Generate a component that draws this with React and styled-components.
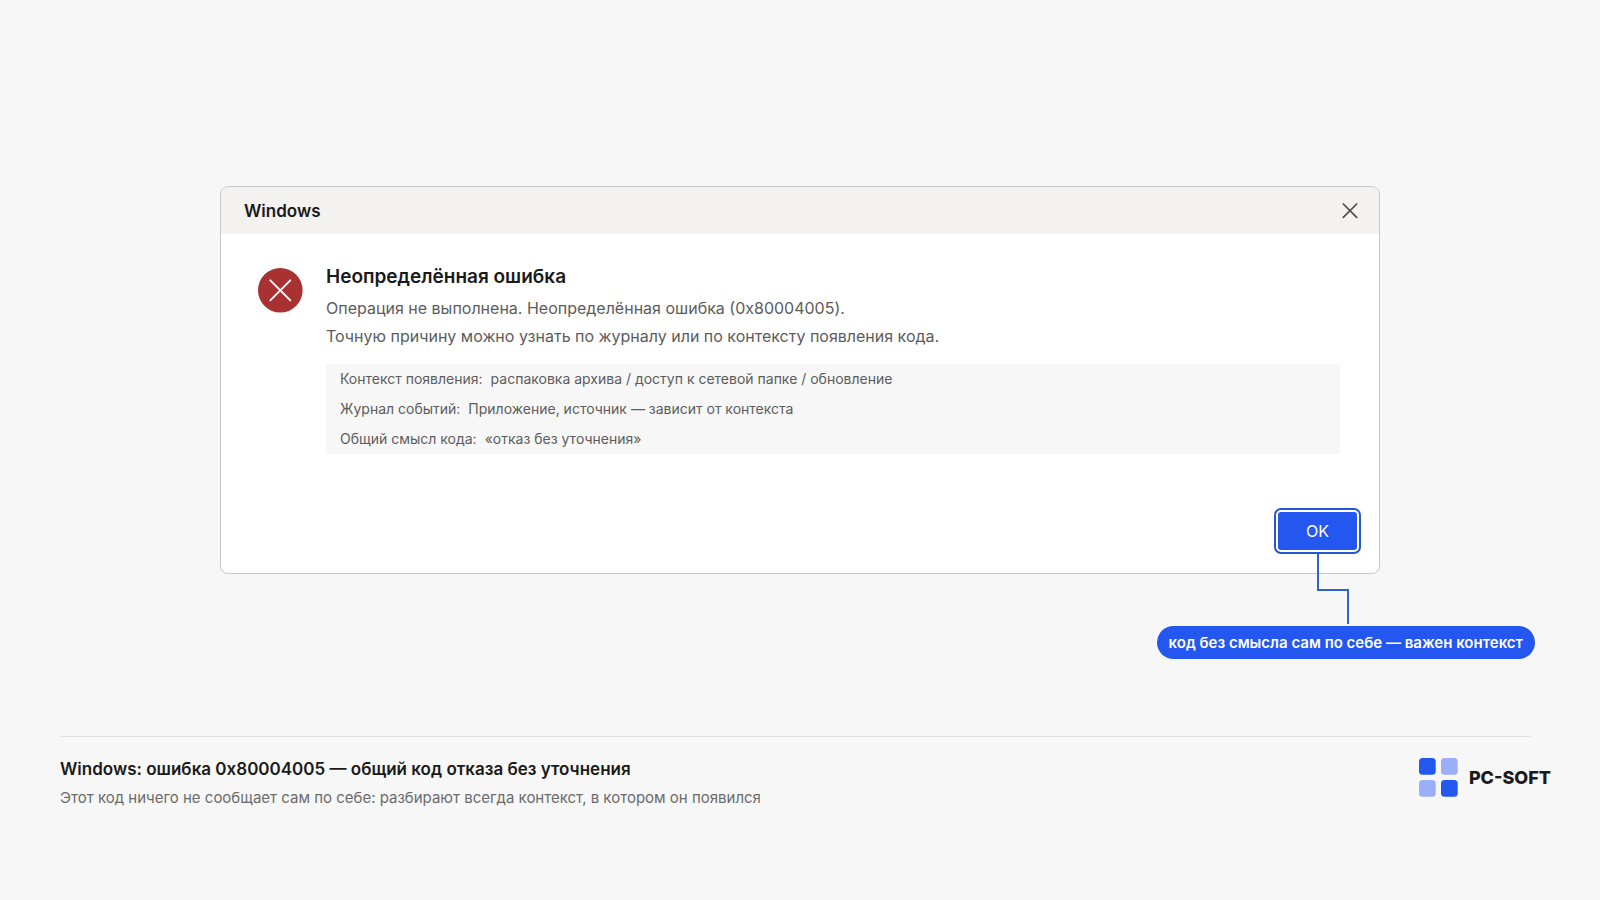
import React from "react";
import styled, { createGlobalStyle } from "styled-components";

const GlobalStyle = createGlobalStyle`
  *, *::before, *::after { box-sizing: border-box; }
  body {
    margin: 0;
    background: #f7f7f7;
    color: #1a1a1a;
    font-family: Inter, "Noto Sans", sans-serif;
  }
  h1, h2, p, dl, dt, dd { margin: 0; }
`;

const Page = styled.div`
  min-height: 100vh;
  padding-top: 186px;
`;

const Stage = styled.main`
  display: flex;
  flex-direction: column;
  padding: 0 220px;
`;

const Dialog = styled.section`
  border: 1px solid #c8c8c8;
  border-radius: 8px;
  background: #ffffff;
  overflow: hidden;
`;

const TitleBar = styled.header`
  display: flex;
  align-items: center;
  justify-content: space-between;
  height: 47px;
  padding: 0 20px 0 23px;
  background: #f3f2f1;
`;

const WindowTitle = styled.h1`
  font-size: 17px;
  line-height: 24px;
  font-weight: 600;
`;

const CloseButton = styled.button`
  display: flex;
  padding: 0;
  border: 0;
  background: none;
  color: #4d4d4d;
`;

const DialogBody = styled.div`
  display: flex;
  align-items: flex-start;
  gap: 23px;
  padding: 29px 39px 0 37px;
`;

const ErrorBadge = styled.svg`
  flex: none;
  margin-top: 5px;
`;

const Message = styled.div`
  flex: 1;
  min-width: 0;
`;

const MessageTitle = styled.h2`
  margin-bottom: 3px;
  font-size: 19px;
  line-height: 28px;
  font-weight: 600;
`;

const MessageLine = styled.p`
  font-size: 16px;
  line-height: 28px;
  color: #5c5c5c;
`;

const Details = styled.dl`
  margin-top: 14px;
  padding: 0 14px;
  border-radius: 2px;
  background: #f7f7f7;
`;

const Detail = styled.div`
  display: flex;
  gap: 8px;
  font-size: 14px;
  line-height: 30px;
  color: #5c5c5c;
`;

const Actions = styled.div`
  display: flex;
  justify-content: flex-end;
  padding: 58px 22px 23px;
`;

const PrimaryButton = styled.button`
  width: 79px;
  height: 38px;
  padding: 0;
  border: 0;
  border-radius: 3px;
  background: #2456f0;
  color: #ffffff;
  box-shadow: 0 0 0 2px #ffffff, 0 0 0 4px #2456d6;
  font-family: inherit;
  font-size: 16px;
`;

const CalloutRow = styled.aside`
  display: flex;
  justify-content: flex-end;
  margin: 52px -155px 0 0;
`;

const Callout = styled.p`
  position: relative;
  padding: 0 12px;
  border-radius: 17px;
  background: #2456f0;
  color: #ffffff;
  font-size: 15px;
  line-height: 33px;
  font-weight: 600;
`;

const Connector = styled.svg`
  position: absolute;
  right: 185px;
  bottom: 35px;
`;

const Footer = styled.footer`
  margin: 77px 69px 0 60px;
  border-top: 1px solid #e0e0e0;
`;

const FooterRow = styled.div`
  display: flex;
  justify-content: space-between;
  align-items: flex-start;
  margin-right: -20px;
  padding-top: 18px;
`;

const FooterTitle = styled.h2`
  margin-bottom: 1px;
  font-size: 17px;
  line-height: 28px;
  font-weight: 600;
`;

const FooterText = styled.p`
  font-size: 15px;
  line-height: 28px;
  color: #6b6b6b;
`;

const Brand = styled.div`
  display: flex;
  align-items: center;
  gap: 11px;
  padding-top: 3px;
  font-size: 18px;
  font-weight: 800;
`;

const details = [
  ["Контекст появления:", "распаковка архива / доступ к сетевой папке / обновление"],
  ["Журнал событий:", "Приложение, источник — зависит от контекста"],
  ["Общий смысл кода:", "«отказ без уточнения»"],
];

export default function App() {
  return (
    <>
      <GlobalStyle />
      <Page>
        <Stage>
          <Dialog>
            <TitleBar>
              <WindowTitle>Windows</WindowTitle>
              <CloseButton type="button" aria-label="Закрыть">
                <svg width="18" height="18" viewBox="0 0 18 18" fill="none" stroke="currentColor" strokeWidth="1.7" strokeLinecap="round">
                  <path d="M2.3 2 15.7 15.4M15.7 2 2.3 15.4" />
                </svg>
              </CloseButton>
            </TitleBar>
            <DialogBody>
              <ErrorBadge width="45" height="45" viewBox="0 0 45 45" aria-hidden="true">
                <circle cx="22.3" cy="22.3" r="22.3" fill="#a83232" />
                <path d="M12.3 12.3 32.3 32.3M32.3 12.3 12.3 32.3" stroke="#fff" strokeWidth="1.9" strokeLinecap="round" />
              </ErrorBadge>
              <Message>
                <MessageTitle>Неопределённая ошибка</MessageTitle>
                <MessageLine>Операция не выполнена. Неопределённая ошибка (0x80004005).</MessageLine>
                <MessageLine>Точную причину можно узнать по журналу или по контексту появления кода.</MessageLine>
                <Details>
                  {details.map(([name, value]) => (
                    <Detail key={name}>
                      <dt>{name}</dt>
                      <dd>{value}</dd>
                    </Detail>
                  ))}
                </Details>
              </Message>
            </DialogBody>
            <Actions>
              <PrimaryButton type="button">OK</PrimaryButton>
            </Actions>
          </Dialog>
          <CalloutRow>
            <Callout>
              <Connector width="34" height="70" viewBox="0 0 34 70" fill="none" stroke="#2f62cf" strokeWidth="2" aria-hidden="true">
                <path d="M2 0V36H32V70" />
              </Connector>
              код без смысла сам по себе — важен контекст
            </Callout>
          </CalloutRow>
        </Stage>
        <Footer>
          <FooterRow>
            <div>
              <FooterTitle>Windows: ошибка 0x80004005 — общий код отказа без уточнения</FooterTitle>
              <FooterText>Этот код ничего не сообщает сам по себе: разбирают всегда контекст, в котором он появился</FooterText>
            </div>
            <Brand>
              <svg width="39" height="39" viewBox="0 0 39 39" aria-hidden="true">
                <rect width="16.7" height="16.7" rx="3.5" fill="#2456f0" />
                <rect x="22" width="16.7" height="16.7" rx="3.5" fill="#9aaff7" />
                <rect y="22" width="16.7" height="16.7" rx="3.5" fill="#9aaff7" />
                <rect x="22" y="22" width="16.7" height="16.7" rx="3.5" fill="#2456f0" />
              </svg>
              PC-SOFT
            </Brand>
          </FooterRow>
        </Footer>
      </Page>
    </>
  );
}
